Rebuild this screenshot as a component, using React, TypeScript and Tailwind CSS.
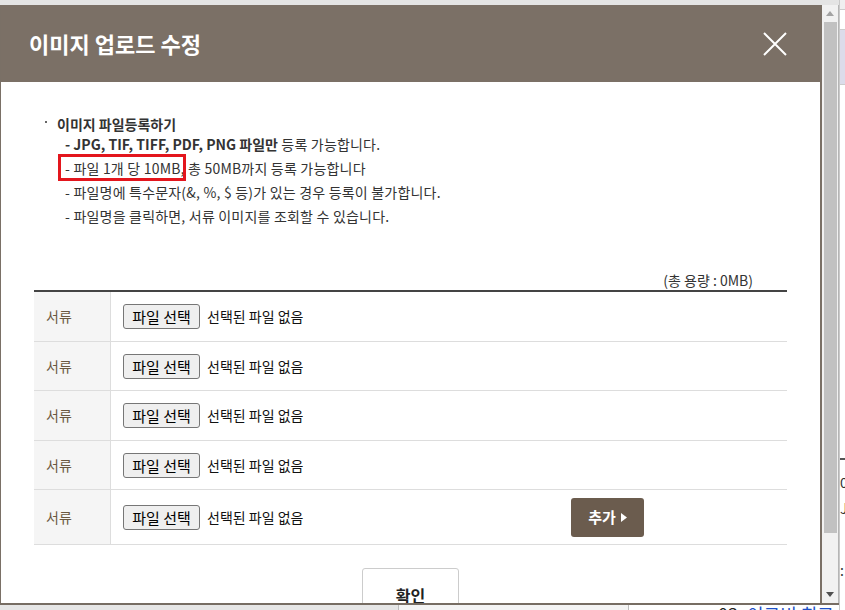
import { useState } from "react";

const fileRows = [
  { id: 1, h: "h-[50px]" },
  { id: 2, h: "h-[49px]" },
  { id: 3, h: "h-[50px]" },
  { id: 4, h: "h-[49px]" },
  { id: 5, h: "h-[55px]" },
];

function FileField() {
  return (
    <div className="flex items-center">
      <button className="h-[25px] w-[77px] rounded-[3px] border border-[#767676] bg-[#efefef] text-[15px] leading-none text-black">
        파일 선택
      </button>
      <span className="ml-[7px] text-[14px] text-[#111]">선택된 파일 없음</span>
    </div>
  );
}

export default function App() {
  const [count] = useState(fileRows.length);

  return (
    <div className="flex h-[610px] w-[845px] overflow-hidden bg-white font-['Noto_Sans_CJK_KR','Noto_Sans',sans-serif]">
      {/* left column: popup frame with page strips above and below */}
      <div className="flex w-[839px] flex-col">
        <div className="h-[5px] bg-[#e4e4e4]" />

        <div className="flex h-[600px] border-b-2 border-[#776d63]">
          {/* dialog */}
          <div className="flex w-[822px] flex-col overflow-hidden border-l border-r-2 border-[#7a7066] bg-white">
            {/* Header */}
            <div className="flex h-[77px] shrink-0 items-center justify-between bg-[#7b7066] pl-[28px] pr-[33px]">
              <h1 className="text-[22px] font-bold text-white">이미지 업로드 수정</h1>
              <svg width="24" height="24" viewBox="0 0 24 24">
                <path d="M1 1 L23 23 M23 1 L1 23" stroke="#ffffff" strokeWidth="2" />
              </svg>
            </div>

            {/* Body */}
            <div className="flex-1 overflow-hidden px-[33px] pt-[32px] text-[14px] text-[#333]">
              <div className="pl-[11px]">
                <div className="flex items-start">
                  <span className="mt-[7px] h-[2px] w-[2px] bg-[#666]" />
                  <span className="ml-[10px] font-bold leading-[20px]">이미지 파일등록하기</span>
                </div>
                <ul className="-mt-[2px] pl-[20px] leading-[24px]">
                  <li>
                    <b>- JPG, TIF, TIFF, PDF, PNG 파일만</b>
                    <span className="tracking-[0.2px]"> 등록 가능합니다.</span>
                  </li>
                  <li className="tracking-[0.2px]">
                    <span className="relative">
                      - 파일 1개 당 10MB
                      <span className="absolute -bottom-[3px] -left-[7px] -right-[5px] -top-[4px] border-[3px] border-[#e3161d]" />
                    </span>
                    , 총 50MB까지 등록 가능합니다
                  </li>
                  <li className="tracking-[0.2px]">- 파일명에 특수문자(&amp;, %, $ 등)가 있는 경우 등록이 불가합니다.</li>
                  <li className="tracking-[0.2px]">- 파일명을 클릭하면, 서류 이미지를 조회할 수 있습니다.</li>
                </ul>
              </div>

              <div className="mt-[42px] pr-[34px] text-right leading-[20px]">(총 용량 : 0MB)</div>

              {/* File table */}
              <div className="border-t-2 border-[#444]">
                {fileRows.map((row) => (
                  <div key={row.id} className={`flex border-b border-[#dddddd] ${row.h}`}>
                    <div className="flex w-[77px] items-center border-r border-[#dddddd] bg-[#f5f5f5] pl-[12px] text-[#6b5840]">
                      서류
                    </div>
                    <div className="flex flex-1 items-center pl-[12px]">
                      <FileField />
                      {row.id === count && (
                        <button className="ml-auto mr-[143px] flex h-[39px] w-[73px] items-center justify-center gap-[5px] rounded-[3px] bg-[#6b5c4e] text-[15px] font-bold text-white">
                          추가
                          <svg width="6" height="9" viewBox="0 0 6 9">
                            <path d="M0 0 L6 4.5 L0 9 Z" fill="#ffffff" />
                          </svg>
                        </button>
                      )}
                    </div>
                  </div>
                ))}
              </div>

              <div className="mt-[23px] flex justify-center">
                <button className="h-[54px] w-[97px] rounded-[3px] border border-[#cccccc] bg-white text-[16px] font-bold text-[#222]">
                  확인
                </button>
              </div>
            </div>
          </div>

          {/* scrollbar */}
          <div className="flex w-[17px] flex-col items-center border-r border-[#b5b5b5] bg-[#f1f1f1]">
            <div className="flex h-[17px] items-center justify-center">
              <svg width="8" height="5" viewBox="0 0 8 5">
                <path d="M0 5 L4 0 L8 5 Z" fill="#a3a3a3" />
              </svg>
            </div>
            <div className="h-[511px] w-[13px] bg-[#c1c1c1]" />
            <div className="flex-1" />
            <div className="flex h-[17px] items-center justify-center">
              <svg width="8" height="5" viewBox="0 0 8 5">
                <path d="M0 0 L8 0 L4 5 Z" fill="#505050" />
              </svg>
            </div>
          </div>
        </div>

        {/* page behind, bottom edge */}
        <div className="flex h-[5px] overflow-hidden">
          <div className="w-[398px] bg-[#e6e6e6]" />
          <div className="w-[230px] border-l border-[#bdbdbd] bg-[#f4f4f4]" />
          <div className="flex-1 overflow-hidden border-l border-[#bdbdbd] bg-white pl-[89px]">
            <div className="-mt-[1px] whitespace-nowrap text-[18px] leading-[20px]">
              <span className="text-[#222]">03. </span>
              <span className="text-[#1e50c8]">이크비 최고 사업</span>
            </div>
          </div>
        </div>
      </div>

      {/* page behind, right edge */}
      <div className="flex w-[6px] flex-col border-l border-[#c9c9c9] bg-white text-[14px] leading-[16px] text-[#333]">
        <div className="h-[10px] border-b border-[#cccccc] bg-[#f0f0f0]" />
        <div className="h-[20px] border-b border-[#cccccc]" />
        <div className="h-[55px] border-b border-[#cccccc] bg-[#dcdcea]" />
        <div className="h-[280px]" />
        <div className="h-[95px] border-b-2 border-[#555]" />
        <div className="mt-[14px] overflow-hidden">0</div>
        <div className="mt-[10px] overflow-hidden">J</div>
        <div className="mt-[46px] overflow-hidden">:</div>
      </div>
    </div>
  );
}
